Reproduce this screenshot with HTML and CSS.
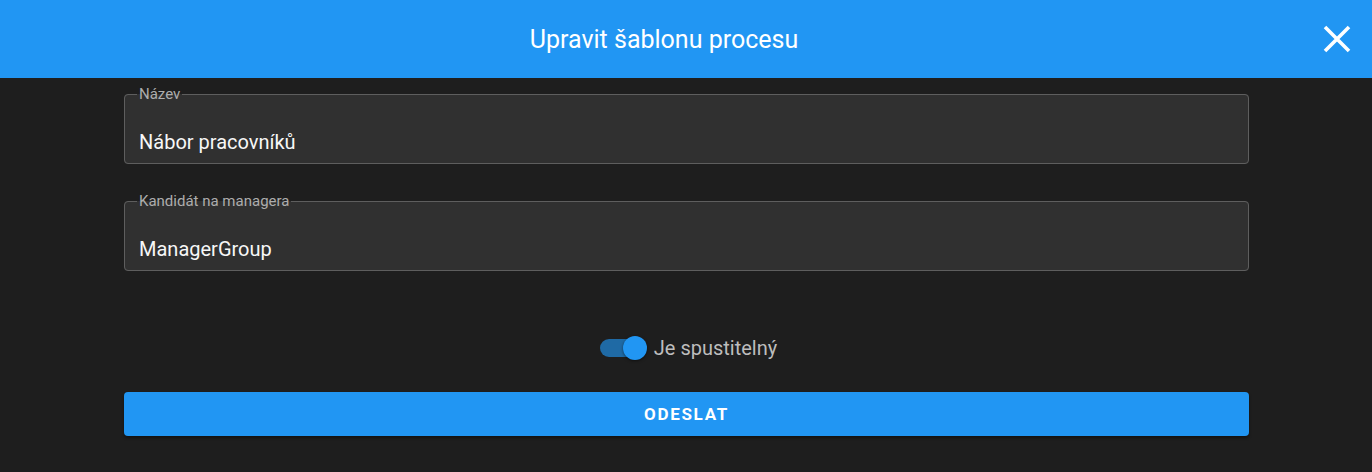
FILE: index.html
```html
<!DOCTYPE html>
<html lang="cs">
<head>
<meta charset="utf-8">
<title>Upravit šablonu procesu</title>
<link rel="stylesheet" href="styles.css">
</head>
<body>
<header class="bar">
  <h1 class="bar-title">Upravit šablonu procesu</h1>
  <button class="close" aria-label="Zavřít">
    <svg viewBox="0 0 28 28" width="28" height="28"><path d="M2 2 L26 26 M26 2 L2 26" stroke="#fff" stroke-width="3.6" fill="none"/></svg>
  </button>
</header>
<main class="form">
  <fieldset class="field">
    <legend class="field-label">Název</legend>
    <div class="field-value">Nábor pracovníků</div>
  </fieldset>
  <fieldset class="field field-second">
    <legend class="field-label">Kandidát na managera</legend>
    <div class="field-value">ManagerGroup</div>
  </fieldset>
  <div class="switch-row">
    <span class="switch"><span class="switch-track"></span><span class="switch-thumb"></span></span>
    <span class="switch-label">Je spustitelný</span>
  </div>
  <button class="submit">ODESLAT</button>
</main>
</body>
</html>
```
FILE: styles.css
```css
html, body {
  margin: 0;
  padding: 0;
}
body {
  background: #1e1e1e;
  font-family: Roboto, "Liberation Sans", sans-serif;
  width: 1372px;
  height: 472px;
  overflow: hidden;
}
.bar {
  height: 78px;
  background: #2196f3;
  display: flex;
  align-items: center;
  padding-right: 44px;
  position: relative;
}
.bar-title {
  flex: 1;
  margin: 0;
  text-align: center;
  color: #fff;
  font-size: 25px;
  font-weight: 400;
  letter-spacing: 0;
}
.close {
  position: absolute;
  right: 21px;
  top: 25px;
  width: 28px;
  height: 28px;
  padding: 0;
  border: 0;
  background: none;
  display: flex;
}
.form {
  padding: 7px 123px 0 124px;
  display: flex;
  flex-direction: column;
}
.field {
  margin: 0;
  padding: 0 12px 9px 12px;
  border: 1px solid #5e5e5e;
  border-radius: 4px;
  background: #303030;
  min-width: 0;
}
.field-second {
  margin-top: 28px;
}
.field-label {
  padding: 0 2px;
  font-size: 15px;
  line-height: 18px;
  color: #adadad;
}
.field-value {
  padding: 27px 2px 0;
  font-size: 20px;
  line-height: 24px;
  color: #f7f7f7;
}
.switch-row {
  margin-top: 65px;
  padding-left: 4px;
  display: flex;
  align-items: center;
  justify-content: center;
  gap: 7px;
  height: 24px;
}
.switch {
  position: relative;
  width: 47px;
  height: 24px;
  display: block;
}
.switch-track {
  position: absolute;
  left: 0;
  top: 3px;
  width: 40px;
  height: 18px;
  border-radius: 9px;
  background: #1f6aa5;
}
.switch-thumb {
  position: absolute;
  right: 0;
  top: 0;
  width: 24px;
  height: 24px;
  border-radius: 50%;
  background: #2196f3;
  box-shadow: 0 1px 3px rgba(0,0,0,0.5);
}
.switch-label {
  font-size: 20px;
  color: #bdbdbd;
}
.submit {
  margin-top: 32px;
  height: 44px;
  border: 0;
  border-radius: 4px;
  background: #2196f3;
  color: #fff;
  font-family: Roboto, "Liberation Sans", sans-serif;
  font-size: 17px;
  font-weight: 700;
  letter-spacing: 1.7px;
  box-shadow: 0 2px 3px rgba(0,0,0,0.4);
}
```
